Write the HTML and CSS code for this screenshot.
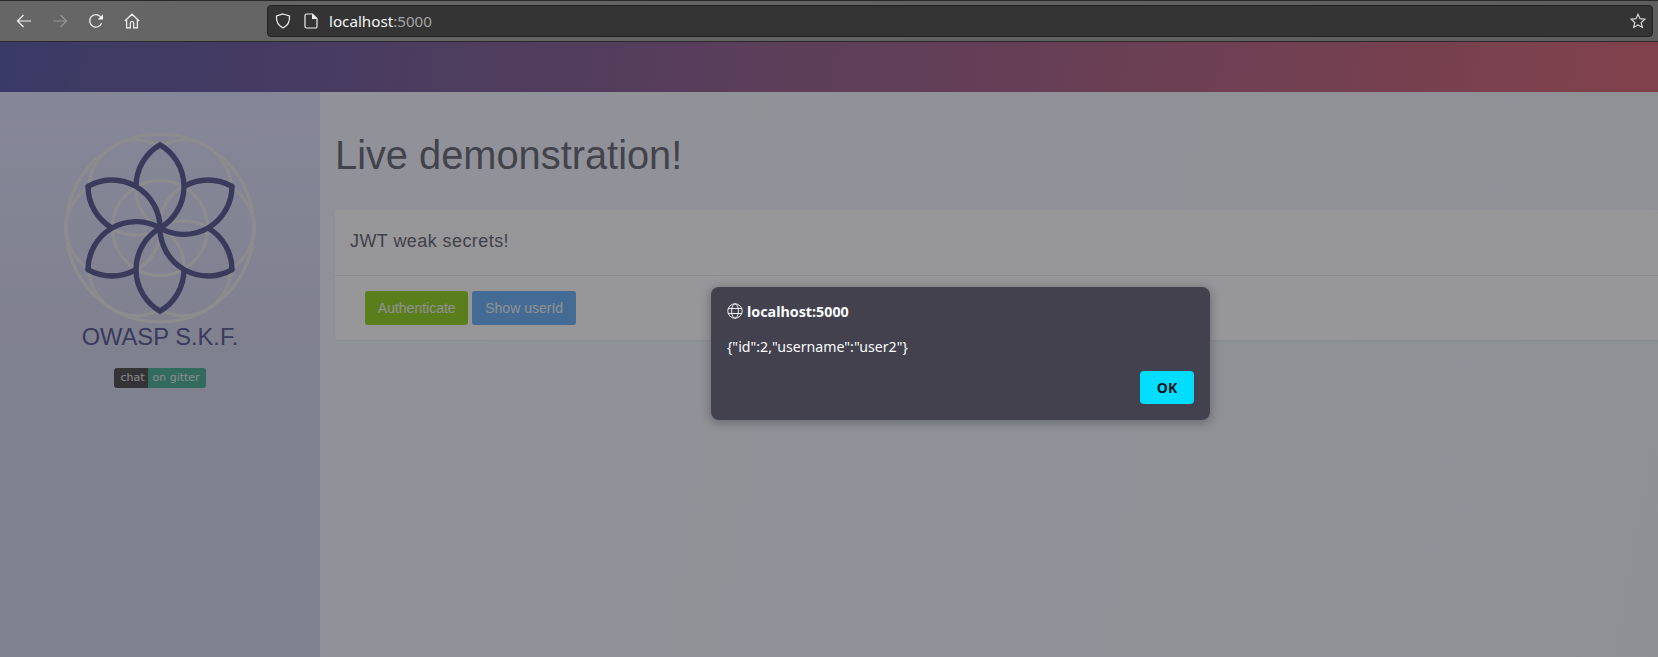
FILE: index.html
```html
<!DOCTYPE html>
<html lang="en">
<head>
<meta charset="utf-8">
<title>Live demonstration!</title>
<link rel="stylesheet" href="styles.css">
</head>
<body>
<div class="toolbar">
  <div class="nav">
    <svg class="nav-icon" viewBox="0 0 16 16"><path d="M15 8H1.500M7.500 2 1.500 8l6 6"/></svg>
    <svg class="nav-icon off" viewBox="0 0 16 16"><path d="M1 8h13.500M8.500 2l6 6-6 6"/></svg>
    <svg class="nav-icon" viewBox="0 0 16 16"><path d="M13.600 10.200A6.200 6.200 0 1 1 12.400 3.600L14.500 6"/><path class="fill" d="M15 1.200V6.600H9.600z"/></svg>
    <svg class="nav-icon" viewBox="0 0 16 16"><path d="M.8 8 8 1.200 15.200 8M2.600 7v7.800h3.700v-4.600a1.700 1.700 0 0 1 3.400 0v4.600h3.700V7"/></svg>
  </div>
  <div class="urlbar">
    <svg class="url-icon" viewBox="0 0 16 16"><path d="M8 1 14.500 3c.4 5.500-1.800 9.700-6.500 12C3.300 12.700 1.100 8.500 1.500 3z"/></svg>
    <svg class="url-icon page" viewBox="0 0 16 16"><path d="M3.500 1h6L14 5.500v8a1.500 1.500 0 0 1-1.500 1.500h-9A1.500 1.500 0 0 1 2 13.500v-11A1.500 1.500 0 0 1 3.500 1z"/><path class="fill" d="M9 1l5 5H9z"/></svg>
    <span class="url">localhost<span class="port">:5000</span></span>
    <svg class="url-icon star" viewBox="0 0 16 16"><path d="M8 1.200 10 5.700l4.900.5-3.700 3.300 1.100 4.900L8 11.900l-4.300 2.500 1.100-4.900L1.100 6.200 6 5.700z"/></svg>
  </div>
</div>
<div class="viewport">
  <header class="topbar"></header>
  <div class="layout">
    <aside class="sidebar">
      <svg class="logo" viewBox="-100 -100 200 200">
        <g class="rings">
          <circle r="94"/>
          <circle r="47.500"/>
          <circle cx="46.500" r="47.500"/>
          <circle cx="-46.500" r="47.500"/>
          <circle cx="23.250" cy="-40.300" r="47.500"/>
          <circle cx="-23.250" cy="-40.300" r="47.500"/>
          <circle cx="23.250" cy="40.300" r="47.500"/>
          <circle cx="-23.250" cy="40.300" r="47.500"/>
        </g>
        <g class="petals">
          <path id="petal" d="M-24-41.600A48 48 0 0 1 0-83.100 48 48 0 0 1 0 0"/>
          <use href="#petal" transform="rotate(60)"/>
          <use href="#petal" transform="rotate(120)"/>
          <use href="#petal" transform="rotate(180)"/>
          <use href="#petal" transform="rotate(240)"/>
          <use href="#petal" transform="rotate(300)"/>
        </g>
      </svg>
      <div class="brand">OWASP S.K.F.</div>
      <div class="badge"><span class="badge-l">chat</span><span class="badge-r">on gitter</span></div>
    </aside>
    <main class="content">
      <h1 class="title">Live demonstration!</h1>
      <section class="card">
        <div class="card-head">JWT weak secrets!</div>
        <div class="card-body">
          <button class="btn green">Authenticate</button>
          <button class="btn blue">Show userId</button>
        </div>
      </section>
    </main>
  </div>
  <div class="overlay">
    <div class="dialog">
      <div class="dialog-title">
        <svg class="globe" viewBox="0 0 16 16"><circle cx="8" cy="8" r="7.200"/><ellipse cx="8" cy="8" rx="3.400" ry="7.200"/><path d="M1 5.500h14M1 10.500h14"/></svg>
        <span>localhost:5000</span>
      </div>
      <div class="dialog-msg">{"id":2,"username":"user2"}</div>
      <div class="dialog-actions"><button class="ok">OK</button></div>
    </div>
  </div>
</div>
</body>
</html>
```
FILE: styles.css
```css
* { box-sizing: border-box; }
html, body { margin: 0; height: 100%; overflow: hidden; }
body { font-family: "Liberation Sans", Arial, sans-serif; background: #fff; }

.toolbar {
  height: 42px;
  display: flex;
  align-items: center;
  padding: 0 5px 0 0;
  background: linear-gradient(90deg, #666 0, #5e5e5e 100%);
  border-top: 1px solid #2a2a2a;
  border-bottom: 1px solid #2a2a2a;
}
.nav { width: 267px; display: flex; gap: 20px; padding-left: 16px; align-items: center; }
.nav-icon { width: 16px; height: 16px; fill: none; stroke: #f2f2f2; stroke-width: 1.200; flex: none; }
.nav-icon.off { stroke: #959595; }
.nav-icon .fill { fill: #f2f2f2; stroke: none; }
.urlbar {
  flex: 1;
  height: 32px;
  display: flex;
  align-items: center;
  background: #343434;
  border: 1px solid #222;
  border-radius: 4px;
  padding: 0 6px 0 7px;
}
.url-icon { width: 16px; height: 16px; fill: none; stroke: #efefef; stroke-width: 1.200; flex: none; }
.url-icon .fill { fill: #efefef; stroke: none; }
.url-icon.page { margin-left: 12px; }
.url { margin-left: 10px; flex: 1; color: #f4f4f4; font: 15.200px "Noto Sans", sans-serif; }
.port { color: #a4a4a4; }
.star { stroke: #d8d8d8; }

.viewport { position: relative; height: calc(100% - 42px); display: flex; flex-direction: column; }
.topbar { height: 50px; flex: none; background: linear-gradient(100deg, #52559f 0, #d4626f 100%); }
.layout { flex: 1; display: flex; min-height: 0; }
.sidebar {
  width: 320px;
  flex: none;
  display: flex;
  flex-direction: column;
  align-items: center;
  padding-top: 36px;
  background: linear-gradient(180deg, #dbdffa 0, #d2d5ea 45%, #d2d5ec 100%);
}
.logo { width: 200px; height: 200px; display: block; flex: none; }
.rings { fill: none; stroke: #e8e8e8; stroke-width: 3.300; }
.petals { fill: none; stroke: #52548f; stroke-width: 5.400; stroke-linejoin: miter; }
.brand { color: #52548f; font-size: 23.700px; line-height: 28px; margin-top: -5px; }
.badge {
  margin-top: 17px;
  height: 20px;
  display: flex;
  border-radius: 3px;
  overflow: hidden;
  font: 11px/20px "DejaVu Sans", sans-serif;
  color: #e6e6e6;
}
.badge-l { padding: 0 4px 0 6px; background: #484848; }
.badge-r { padding: 0 6px 0 4px; background: #43ad8e; }

.content { flex: 1; min-width: 0; padding: 40px 0 0 15px; background: linear-gradient(100deg, #f1f4fc 0, #edf1f6 100%); }
.title { margin: 0 0 32px; font-size: 39.800px; font-weight: 400; line-height: 46px; color: #62646e; white-space: nowrap; }
.card { margin-right: -10px; background: #fcfcfc; border-radius: 4px; box-shadow: 0 1px 2px rgba(0,0,0,.05); }
.card-head { height: 66px; padding: 0 15px 2px; display: flex; align-items: center; font-size: 18px; letter-spacing: .43px; color: #5f616a; border-bottom: 1px solid #e8e8e8; }
.card-body { height: 64px; padding: 15px 0 0 30px; display: flex; align-items: flex-start; gap: 4px; }
.btn { height: 34px; padding: 0 12.800px; border: 0; border-radius: 3px; font: 14px "Liberation Sans", sans-serif; color: #f0f0f0; }
.green { background: #8fd018; }
.blue { background: #64aef0; }

.overlay { position: absolute; inset: 0; background: rgba(28,27,34,.45); }
.dialog {
  position: absolute;
  left: 711px;
  top: 245px;
  width: 499px;
  height: 133px;
  background: #42414d;
  border-radius: 8px;
  padding: 15px 16px;
  color: #fbfbfe;
  font-family: "Noto Sans", sans-serif;
  box-shadow: 0 2px 8px 2px rgba(20,20,25,.25);
}
.dialog-title { display: flex; align-items: center; gap: 4px; height: 18px; font-size: 14.300px; font-weight: 700; }
.globe { width: 16px; height: 16px; fill: none; stroke: #fbfbfe; stroke-width: .9; flex: none; }
.dialog-msg { margin-top: 18px; font-size: 14.150px; line-height: 18px; }
.dialog-actions { display: flex; justify-content: flex-end; margin-top: 15px; }
.ok { width: 54px; height: 33px; border: 0; border-radius: 4px; background: #00ddff; color: #15141a; font: 700 14px "Noto Sans", sans-serif; }
```
